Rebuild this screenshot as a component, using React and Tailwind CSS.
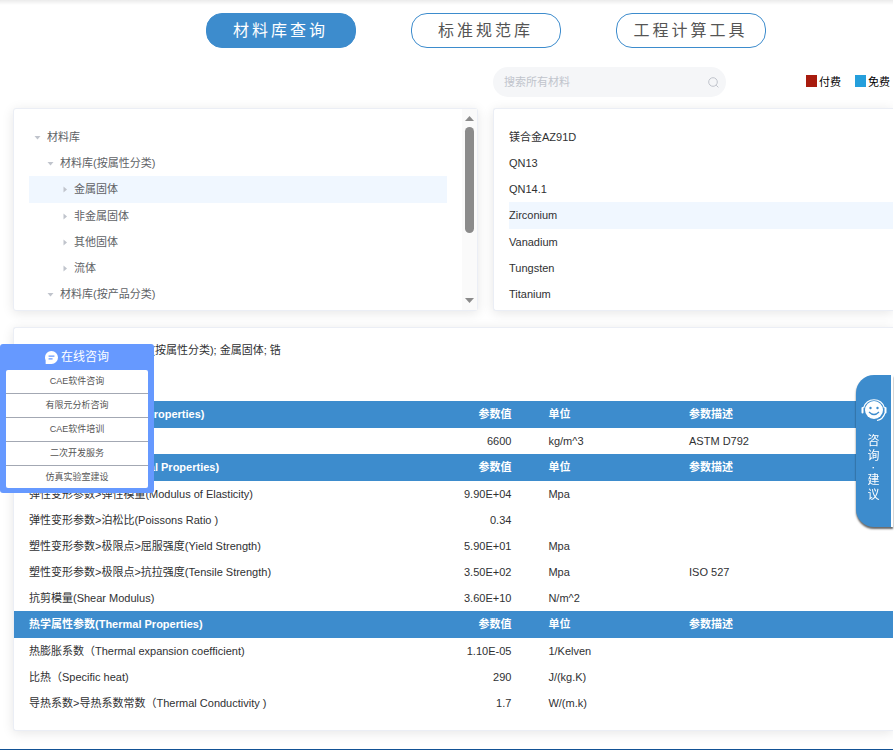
const tabs = ["材料库查询", "标准规范库", "工程计算工具"];

const tree = [
  { label: "材料库", level: 0, open: true },
  { label: "材料库(按属性分类)", level: 1, open: true },
  { label: "金属固体", level: 2, active: true },
  { label: "非金属固体", level: 2 },
  { label: "其他固体", level: 2 },
  { label: "流体", level: 2 },
  { label: "材料库(按产品分类)", level: 1, open: true },
];

const levelPadding = ["pl-[5px]", "pl-[18px]", "pl-[32px]"];

const materials = ["镁合金AZ91D", "QN13", "QN14.1", "Zirconium", "Vanadium", "Tungsten", "Titanium"];

const sections = [
  {
    title: "物理属性参数(Physical Properties)",
    rows: [["密度(Density)", "6600", "kg/m^3", "ASTM D792"]],
  },
  {
    title: "力学属性参数(Mechanical Properties)",
    rows: [
      ["弹性变形参数>弹性模量(Modulus of Elasticity)", "9.90E+04", "Mpa", ""],
      ["弹性变形参数>泊松比(Poissons Ratio )", "0.34", "", ""],
      ["塑性变形参数>极限点>屈服强度(Yield Strength)", "5.90E+01", "Mpa", ""],
      ["塑性变形参数>极限点>抗拉强度(Tensile Strength)", "3.50E+02", "Mpa", "ISO 527"],
      ["抗剪模量(Shear Modulus)", "3.60E+10", "N/m^2", ""],
    ],
  },
  {
    title: "热学属性参数(Thermal Properties)",
    rows: [
      ["热膨胀系数（Thermal expansion coefficient)", "1.10E-05", "1/Kelven", ""],
      ["比热（Specific heat)", "290", "J/(kg.K)", ""],
      ["导热系数>导热系数常数（Thermal Conductivity )", "1.7", "W/(m.k)", ""],
    ],
  },
];

const consultLinks = ["CAE软件咨询", "有限元分析咨询", "CAE软件培训", "二次开发服务", "仿真实验室建设"];

function Tabs() {
  return (
    <nav className="flex justify-center gap-[55px] pt-[13px] pl-[78px]">
      {tabs.map((tab, index) => (
        <button
          className={
            index === 0
              ? "h-[35px] w-[150px] rounded-2xl border border-[#3d8ccd] bg-[#3d8ccd] text-base tracking-[3px] text-white"
              : "h-[35px] w-[150px] rounded-2xl border border-[#3d8ccd] bg-white text-base tracking-[3px] text-[#555]"
          }
          key={tab}
          type="button"
        >
          {tab}
        </button>
      ))}
    </nav>
  );
}

function SearchBar() {
  return (
    <div className="mt-[19px] grid grid-cols-[93fr_80fr] gap-[15px] pl-[13px]">
      <div className="col-start-2 flex items-center justify-between pr-[3px]">
        <label className="flex h-[30px] w-[233px] items-center rounded-full bg-[#f5f6f8] pr-[7px] pl-[11px]">
          <input
            aria-label="搜索所有材料"
            className="min-w-0 flex-1 bg-transparent text-[11px] outline-none placeholder:text-[#c0c4cc]"
            placeholder="搜索所有材料"
            type="text"
          />
          <svg className="size-[11px] text-[#c0c4cc]" fill="none" stroke="currentColor" viewBox="0 0 11 11">
            <circle cx="5" cy="5" r="4.3" />
            <path d="M8.2 8.2 10.4 10.4" />
          </svg>
        </label>
        <div className="flex gap-[14px] text-[11px] text-black">
          <span className="flex items-center gap-[2px]">
            <i className="mb-[3px] h-3 w-[11px] bg-[#a81b0e]" />付费
          </span>
          <span className="flex items-center gap-[2px]">
            <i className="mb-[3px] h-3 w-[11px] bg-[#259fdc]" />免费
          </span>
        </div>
      </div>
    </div>
  );
}

function Caret({ open }) {
  return (
    <svg className="size-[7px] shrink-0 fill-[#c0c4cc]" viewBox="0 0 7 7">
      <path d={open ? "M.5 2h6L3.500 5.500z" : "M2.500 .5v6L6 3.500z"} />
    </svg>
  );
}

function ScrollBar() {
  return (
    <div className="flex w-[15px] flex-col items-center bg-[#fafafa] py-[6px]">
      <svg className="h-[6px] w-[9px] fill-[#8b8b8b]" viewBox="0 0 9 6">
        <path d="M0 6h9L4.5 1z" />
      </svg>
      <div className="mt-[6px] h-[106px] w-[9px] rounded-full bg-[#8b8b8b]" />
      <svg className="mt-auto h-[6px] w-[9px] fill-[#8b8b8b]" viewBox="0 0 9 6">
        <path d="M0 0h9L4.5 5z" />
      </svg>
    </div>
  );
}

function MaterialTree() {
  return (
    <div className="flex rounded-[3px] border border-[#ebeef5] bg-white shadow-[0_2px_12px_rgba(0,0,0,0.1)]">
      <ul className="flex-1 pt-[15px] pr-[15px] pb-[3px] pl-[15px] text-[#606266]">
        {tree.map((node) => (
          <li className={node.active ? "bg-[#f0f7ff]" : ""} key={node.label}>
            <button
              className={`flex w-full items-center gap-[6px] text-left ${
                node.active ? "h-[27px]" : "h-[26px]"
              } ${levelPadding[node.level]}`}
              type="button"
            >
              <Caret open={node.open} />
              {node.label}
            </button>
          </li>
        ))}
      </ul>
      <ScrollBar />
    </div>
  );
}

function MaterialList() {
  return (
    <div className="rounded-l-[3px] border border-r-0 border-[#ebeef5] bg-white pt-[15px] pl-[15px] text-[#303133] shadow-[0_2px_12px_rgba(0,0,0,0.1)]">
      <ul>
        {materials.map((name) => (
          <li className={name === "Zirconium" ? "bg-[#f0f7ff]" : ""} key={name}>
            <button
              className={`block w-full text-left ${name === "Zirconium" ? "h-[27px]" : "h-[26px]"}`}
              type="button"
            >
              {name}
            </button>
          </li>
        ))}
      </ul>
    </div>
  );
}

function MaterialDetail() {
  return (
    <section className="mt-4 ml-[13px] rounded-l-[3px] border border-r-0 border-[#ebeef5] bg-white pb-[14px] text-[#303133] shadow-[0_2px_12px_rgba(0,0,0,0.1)]">
      <p className="h-[73px] pt-[14px] pl-[15px] leading-4">所属分类: 材料库; 材料库(按属性分类); 金属固体; 锆</p>
      <table className="w-full table-fixed text-left">
        <colgroup>
          <col className="w-[43%]" />
          <col className="w-[17%]" />
          <col className="w-[16%]" />
          <col />
        </colgroup>
        {sections.map((section) => (
          <tbody key={section.title}>
            <tr className="h-[27px] bg-[#3d8ccd] text-white">
              <th className="pl-[15px]">{section.title}</th>
              <th className="pr-[30px] text-right">参数值</th>
              <th className="pl-[7px]">单位</th>
              <th className="pl-[7px]">参数描述</th>
            </tr>
            {section.rows.map(([name, value, unit, note]) => (
              <tr className="h-[26px]" key={name}>
                <td className="pl-[15px] whitespace-nowrap">{name}</td>
                <td className="pr-[30px] text-right">{value}</td>
                <td className="pl-[7px]">{unit}</td>
                <td className="pl-[7px]">{note}</td>
              </tr>
            ))}
          </tbody>
        ))}
      </table>
    </section>
  );
}

function ConsultPanel() {
  return (
    <aside className="fixed top-[344px] left-0 w-[154px] rounded-[3px] bg-[#6699ff] px-[6px] pb-[5px]">
      <h2 className="flex h-[26px] items-center justify-center gap-[3px] text-xs text-white">
        <svg className="size-[13px]" viewBox="0 0 12 12">
          <path d="M6 0a6 6 0 1 1 0 12H.6V8.600A6 6 0 0 1 6 0z" fill="#fff" />
          <path d="M3.300 4.800h5.400M3.300 7.300h3.700" stroke="#6699ff" strokeWidth="1.100" />
        </svg>
        在线咨询
      </h2>
      <ul className="overflow-hidden rounded-[2px] bg-white text-center text-[9px] text-[#555]">
        {consultLinks.map((link) => (
          <li className="h-6 border-b border-[#a3a8b3] leading-[22px] last:h-[22px] last:border-b-0" key={link}>
            <a href="#consult">{link}</a>
          </li>
        ))}
      </ul>
    </aside>
  );
}

function FeedbackButton() {
  return (
    <button
      className="fixed top-[375px] right-px flex h-[152px] w-[37px] flex-col items-center rounded-l-[18px] border-r-2 border-white bg-[#3d8ccd] pt-[23px] text-xs leading-[15px] text-white shadow-[0_2px_2px_rgba(0,0,0,0.6)]"
      type="button"
    >
      <svg className="mb-3 h-6 w-[26px]" fill="none" viewBox="0 0 26 24">
        <circle cx="13" cy="12" fill="#fff" r="9" />
        <path d="M2.500 10a10.800 10.800 0 0 1 21 0" stroke="#fff" strokeWidth="1.200" />
        <path d="M1.500 10v4.500M24.500 10v4.500" stroke="#fff" strokeLinecap="round" strokeWidth="2" />
        <path d="M24 15q-2 6.500-8 7.500" stroke="#fff" strokeWidth="1.200" />
        <circle cx="9.500" cy="10" fill="#3d8ccd" r="1.200" />
        <circle cx="16.500" cy="10" fill="#3d8ccd" r="1.200" />
        <path d="M8 14q5 5 10 0" stroke="#3d8ccd" strokeWidth="1.200" />
      </svg>
      <span>咨</span>
      <span>询</span>
      <span className="text-[9px] leading-[9px] font-bold">·</span>
      <span>建</span>
      <span>议</span>
    </button>
  );
}

function App() {
  return (
    <div className="bg-white font-['Liberation_Sans','Noto_Sans_CJK_SC',sans-serif] text-[11px]">
      <main className="mr-px overflow-hidden border-b border-[#125295] pb-[18px]">
        <div className="-mb-[5px] h-[5px] bg-linear-to-b from-[#ebebeb] to-white" />
        <Tabs />
        <SearchBar />
        <div className="mt-[11px] grid grid-cols-[93fr_80fr] gap-[15px] pl-[13px]">
          <MaterialTree />
          <MaterialList />
        </div>
        <MaterialDetail />
      </main>
      <ConsultPanel />
      <FeedbackButton />
    </div>
  );
}

export default App;
